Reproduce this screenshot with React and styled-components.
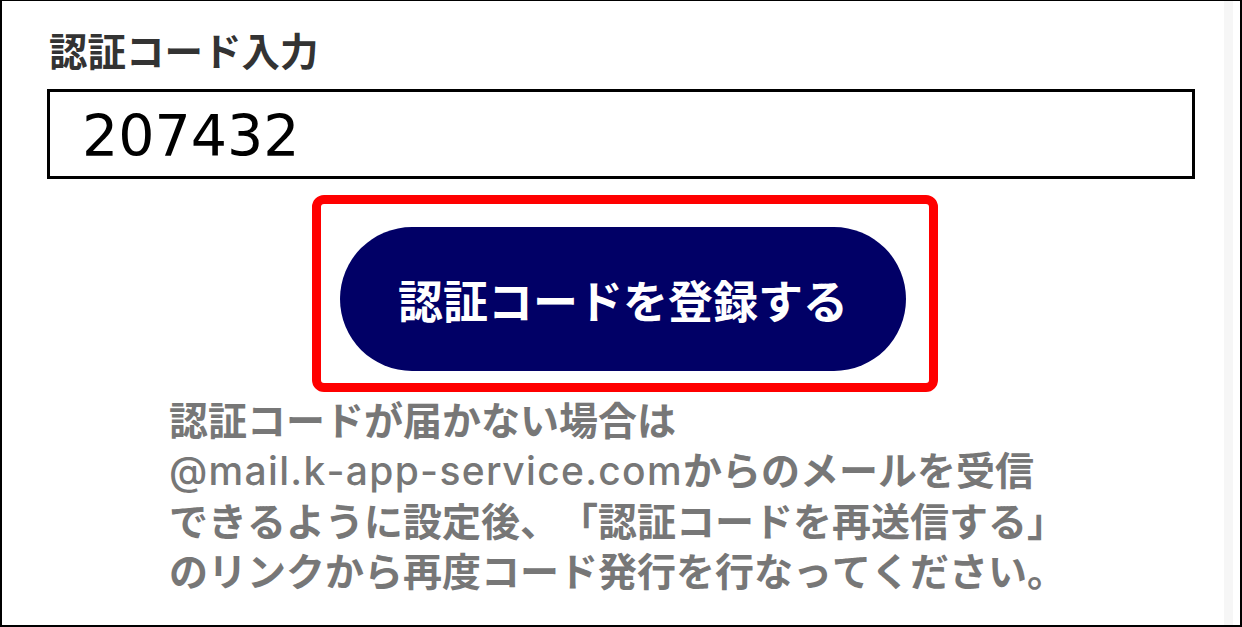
import React from "react";
import styled, { createGlobalStyle } from "styled-components";

const Global = createGlobalStyle`
  html, body { margin: 0; padding: 0; background: #fff; }
  * { box-sizing: border-box; }
`;

const Frame = styled.div`
  width: 1242px;
  height: 627px;
  display: flex;
  background: #fff;
  border: 2px solid #000;
  border-top-width: 1px;
  overflow: hidden;
`;

const Main = styled.main`
  flex: 1;
  display: flex;
  flex-direction: column;
  align-items: flex-start;
  padding: 26px 29px 0 45px;
  font-family: "Noto Sans CJK JP", sans-serif;
`;

const ScrollTrack = styled.div`
  width: 9px;
  background: #f6f6f6;
`;

const EdgeGap = styled.div`
  width: 7px;
  background: #fff;
`;

const Label = styled.label`
  display: block;
  margin-left: 2px;
  font-size: 38.5px;
  line-height: 44px;
  font-weight: 700;
  color: #333;
`;

const CodeField = styled.div`
  margin-top: 18px;
  width: 100%;
  height: 90px;
  border: 3px solid #000;
  padding: 4px 0 0 32px;
  font-family: "DejaVu Sans", sans-serif;
  font-size: 57px;
  line-height: 80px;
  color: #000;
`;

const Highlight = styled.div`
  margin: 16px 0 0 265px;
  border: 9px solid #ff0000;
  border-radius: 12px;
  padding: 23px 23px 12px 19px;
`;

const SubmitButton = styled.button`
  display: flex;
  align-items: center;
  justify-content: center;
  width: 566px;
  height: 144px;
  border: none;
  border-radius: 72px;
  background: #010066;
  color: #fff;
  font-family: "Noto Sans CJK JP", sans-serif;
  font-size: 45px;
  font-weight: 700;
  padding: 0;
  cursor: pointer;
`;

const Note = styled.p`
  margin: 2px 0 0 122px;
  font-size: 39px;
  line-height: 49.5px;
  font-weight: 700;
  color: #777;
  white-space: nowrap;
  text-spacing-trim: space-all;
  font-kerning: none;
`;

const Mail = styled.span`
  font-family: "Inter", "Liberation Sans", sans-serif;
  font-weight: 500;
  letter-spacing: 1.3px;
`;

export default function App() {
  return (
    <>
      <Global />
      <Frame>
        <Main>
          <Label>認証コード入力</Label>
          <CodeField>207432</CodeField>
          <Highlight>
            <SubmitButton>認証コードを登録する</SubmitButton>
          </Highlight>
          <Note>
            認証コードが届かない場合は
            <br />
            <Mail>@mail.k-app-service.com</Mail>からのメールを受信
            <br />
            できるように設定後、「認証コードを再送信する」
            <br />
            のリンクから再度コード発行を行なってください。
          </Note>
        </Main>
        <ScrollTrack />
        <EdgeGap />
      </Frame>
    </>
  );
}
